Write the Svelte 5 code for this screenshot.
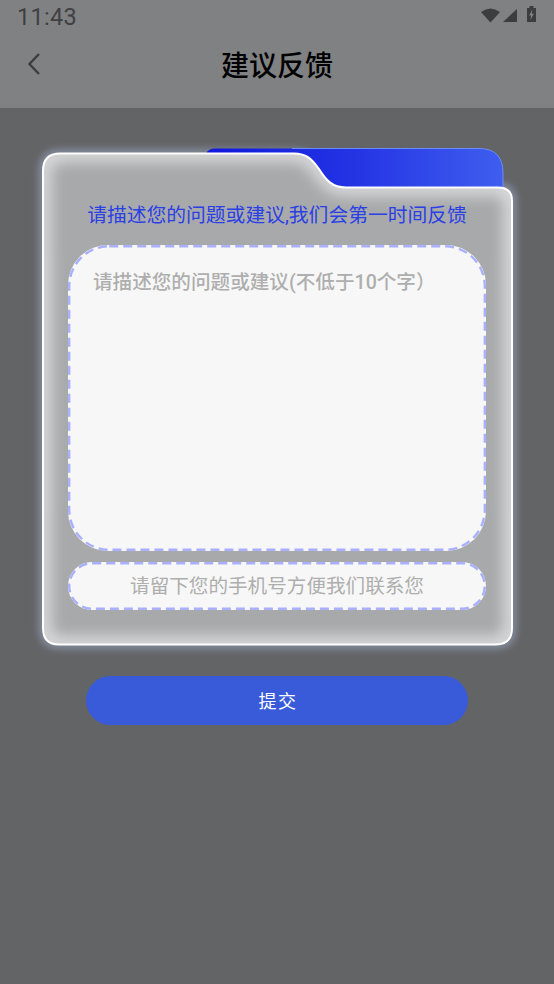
<script>
  let detail = $state('');
  let phone = $state('');

  const CARD = 'M1 23 Q1 5.5 18 5.5 H252 C266 5.5 271 13 277 21 C284 32 290 39.5 304 39.5 H456 Q470 39.5 470 53 V480 Q470 496.5 454 496.5 H17 Q1 496.5 1 480 Z';
  const TAB = 'M164 42 V6 Q166 0.5 173 0.5 H437 Q461 0.5 461 25 V42 Z';
</script>

<div class="page">
  <header class="top">
    <div class="status">
      <span class="time">11:43</span>
      <svg class="sys" width="56" height="17" viewBox="0 0 56 17" aria-hidden="true">
        <path d="M1 6 Q10.5 -1 20 6 L10.5 16.5 Z" fill="#3c3d3f" />
        <path d="M23 16 L37 3 V16 Z" fill="#3c3d3f" />
        <path d="M47 2 H49.5 V0 H53.5 V2 H56 V16 H47 Z" fill="#3c3d3f" />
        <path d="M52.4 3.5 L49.2 9.4 H51 L50.4 14 L53.8 7.8 H51.8 Z" fill="#808183" />
      </svg>
    </div>
    <div class="nav">
      <button class="back" aria-label="返回">
        <svg width="14" height="24" viewBox="0 0 14 24"><path d="M12 2 L2.5 12 L12 22" fill="none" stroke="#3c3d3f" stroke-width="2.4" /></svg>
      </button>
      <h1>建议反馈</h1>
    </div>
  </header>

  <main class="body">
    <section class="folder">
      <svg class="shape" width="470" height="497" viewBox="0 0 470 497" aria-hidden="true">
        <defs>
          <linearGradient id="tabfill" x1="0" x2="1" y1="0" y2="0">
            <stop offset="0" stop-color="#0f18dc" />
            <stop offset="0.5" stop-color="#2434e4" />
            <stop offset="1" stop-color="#3f5eef" />
          </linearGradient>
          <clipPath id="inside"><path d={CARD} /></clipPath>
          <filter id="soft" x="-10%" y="-10%" width="120%" height="120%"><feGaussianBlur stdDeviation="8" /></filter>
          <filter id="halo" x="-10%" y="-10%" width="120%" height="120%"><feGaussianBlur stdDeviation="4" /></filter>
        </defs>
        <path d={CARD} fill="none" stroke="#b4c8ee" stroke-width="5" filter="url(#halo)" opacity="0.75" />
        <path d={TAB} fill="url(#tabfill)" />
        <path d="M250 0.5 H437 Q461 0.5 461 25 V40" fill="none" stroke="#6f8cf5" stroke-width="1" />
        <path d={CARD} fill="#a8a9ab" />
        <g clip-path="url(#inside)">
          <path d={CARD} fill="none" stroke="#ffffff" stroke-width="12" filter="url(#soft)" opacity="0.8" />
        </g>
        <path d={CARD} fill="none" stroke="#ffffff" stroke-width="2" />
      </svg>
      <div class="content">
        <p class="lead">请描述您的问题或建议,我们会第一时间反馈</p>
        <div class="field tall">
          <textarea class="detail" placeholder="请描述您的问题或建议(不低于10个字）" bind:value={detail}></textarea>
          <svg class="dash" aria-hidden="true"><rect x="1.2" y="1.2" width="415.6" height="303.6" rx="40" /></svg>
        </div>
        <div class="field short">
          <input class="phone" placeholder="请留下您的手机号方便我们联系您" bind:value={phone} />
          <svg class="dash" aria-hidden="true"><rect x="1.2" y="1.2" width="415.6" height="45.6" rx="23" /></svg>
        </div>
      </div>
    </section>
    <button class="submit">提交</button>
  </main>
</div>

<style>
  :global(body) { margin: 0; background: #636466; }
  .page { width: 554px; height: 984px; display: flex; flex-direction: column; background: #636466; font-family: Roboto, "Noto Sans CJK SC", sans-serif; overflow: hidden; }
  .top { height: 108px; flex: 0 0 auto; background: #808183; box-sizing: border-box; }
  .status { height: 34px; display: flex; align-items: center; justify-content: space-between; padding: 0 18px 0 17px; }
  .time { font-size: 23.5px; color: #3f4042; letter-spacing: 0.3px; }
  .sys { display: block; margin-top: -5px; }
  .nav { height: 62px; box-sizing: border-box; padding-bottom: 3px; position: relative; display: flex; align-items: center; justify-content: center; }
  .back { position: absolute; left: 27px; top: 18px; padding: 0; border: 0; background: none; display: flex; }
  h1 { margin: 0; font-size: 28px; font-weight: 500; color: #000; font-family: "Noto Sans CJK SC", sans-serif; }
  .body { flex: 1; display: flex; flex-direction: column; align-items: center; padding-top: 40px; }
  .folder { position: relative; width: 470px; height: 497px; }
  .shape { position: absolute; inset: 0; overflow: visible; }
  .content { position: relative; display: flex; flex-direction: column; align-items: center; padding: 53px 25px 0; }
  .lead { margin: 0 0 15px; height: 29px; line-height: 29px; font-size: 19.8px; color: #2b40e4; white-space: nowrap; }
  .field { position: relative; width: 418px; background: #f7f7f7; }
  .field.tall { height: 306px; border-radius: 40px; }
  .field.short { height: 48px; border-radius: 24px; margin-top: 11px; }
  .dash { position: absolute; inset: 0; width: 100%; height: 100%; pointer-events: none; }
  .dash rect { fill: none; stroke: #a8b0ff; stroke-width: 2.4; stroke-dasharray: 9 5; }
  .detail, .phone { box-sizing: border-box; display: block; width: 100%; height: 100%; background: none; border: 0; font-family: inherit; outline: none; color: #333; }
  .detail { padding: 24px 25px; font-size: 19.6px; font-weight: 500; line-height: 28px; resize: none; }
  .phone { font-size: 19.6px; text-align: center; padding: 0 20px; }
  .detail::placeholder, .phone::placeholder { color: #aeaeae; opacity: 1; }
  .submit { margin-top: 31px; width: 382px; height: 49px; border: 0; border-radius: 25px; background: #3a5bd9; color: #fff; font-family: inherit; font-size: 18px; letter-spacing: 1.5px; padding: 0 0 2px 2px; }
</style>
